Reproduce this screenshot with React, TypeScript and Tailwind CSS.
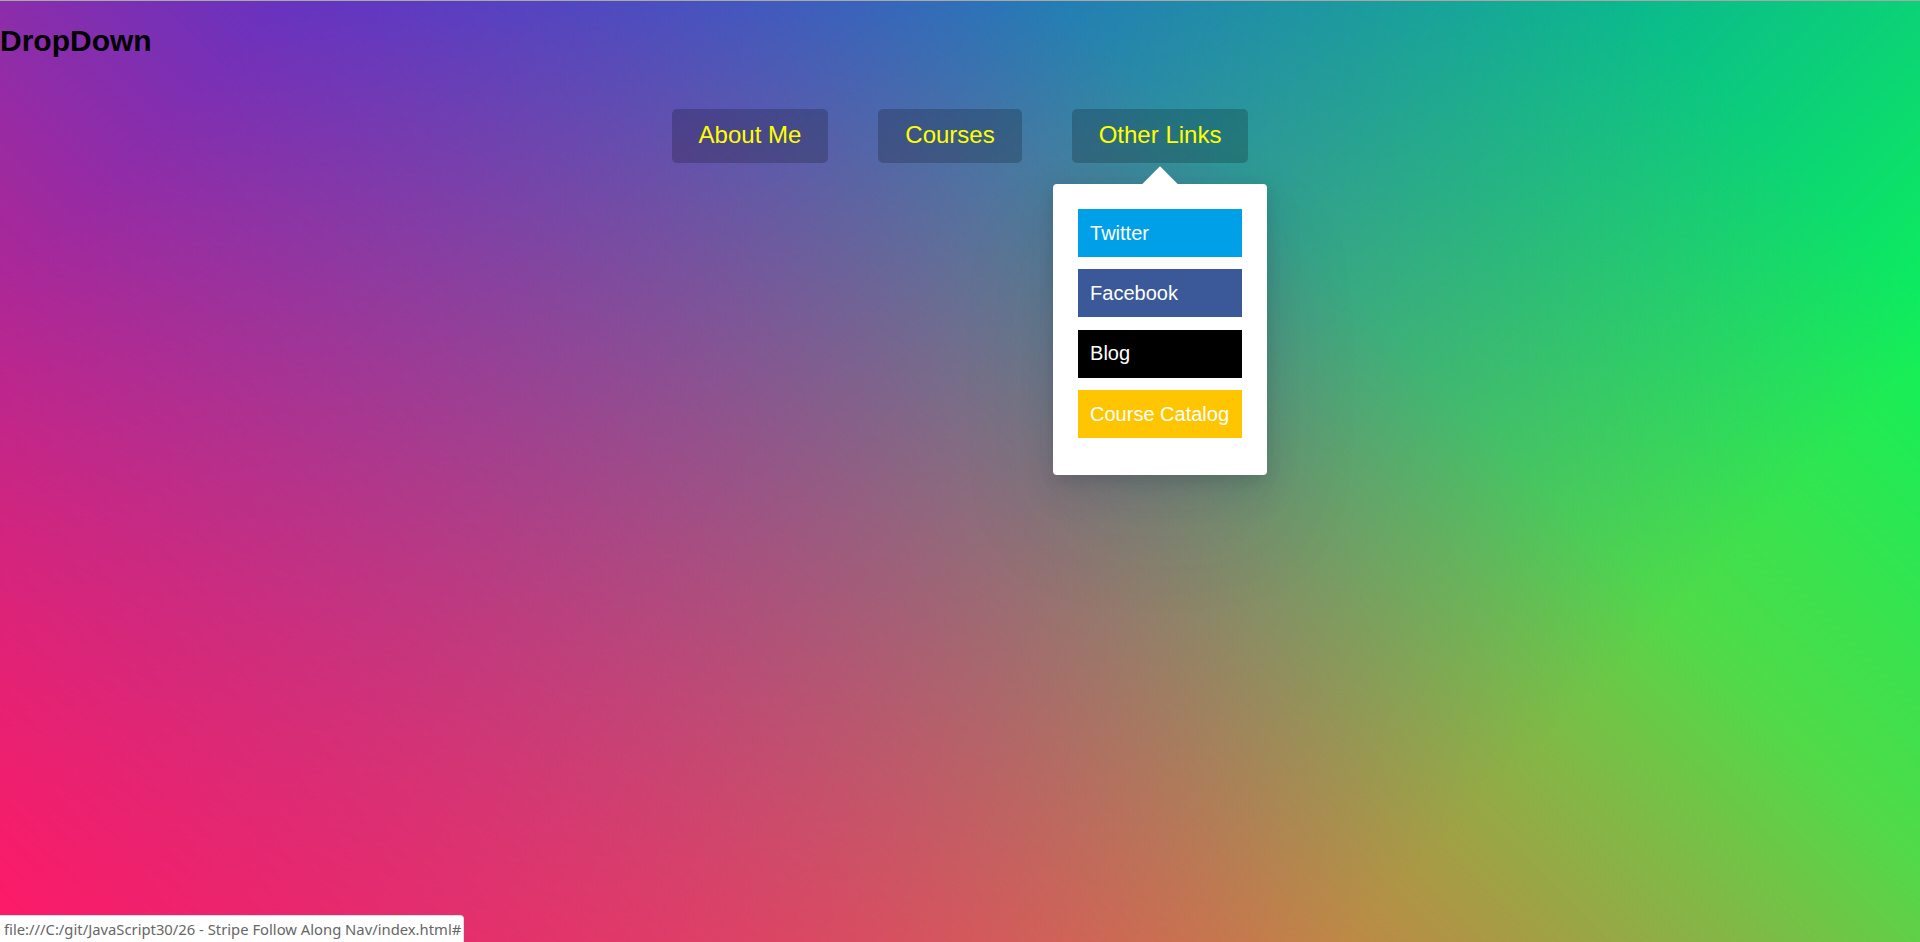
import React from "react";

const links = [
  { label: "Twitter", bg: "bg-[#00a0e9]" },
  { label: "Facebook", bg: "bg-[#3b5998]" },
  { label: "Blog", bg: "bg-black" },
  { label: "Course Catalog", bg: "bg-[#ffc600]" },
];

export default function App() {
  return (
    <div className="relative min-h-screen w-full overflow-hidden font-['Liberation_Sans',Arial,sans-serif] bg-[image:linear-gradient(45deg,hsla(340,100%,55%,1)_0%,hsla(340,100%,55%,0)_70%),linear-gradient(135deg,hsla(225,95%,50%,1)_10%,hsla(225,95%,50%,0)_80%),linear-gradient(225deg,hsla(140,90%,50%,1)_10%,hsla(140,90%,50%,0)_80%),linear-gradient(315deg,hsla(35,95%,55%,1)_100%,hsla(35,95%,55%,0)_70%)]">
      <div className="absolute left-0 top-0 h-px w-full bg-[#a8a8a8]" />
      <h2 className="mt-[24px] text-[30px] leading-[34px] font-bold text-black">DropDown</h2>
      <nav className="mt-[51px]">
        <ul className="flex justify-center gap-[50px]">
          <li>
            <a href="#" className="block rounded-[5px] bg-black/20 px-[27px] pt-[12px] pb-[14px] text-[24px] leading-[28px] text-[#ffff00]">
              About Me
            </a>
          </li>
          <li>
            <a href="#" className="block rounded-[5px] bg-black/20 px-[27px] pt-[12px] pb-[14px] text-[24px] leading-[28px] text-[#ffff00]">
              Courses
            </a>
          </li>
          <li className="relative">
            <a href="#" className="block rounded-[5px] bg-black/20 px-[27px] pt-[12px] pb-[14px] text-[24px] leading-[28px] text-[#ffff00]">
              Other Links
            </a>
            <div className="absolute left-1/2 top-[75px] z-10 w-[214px] -translate-x-1/2 rounded-[4px] bg-white px-[25px] pt-[25px] pb-[37px] shadow-[0_50px_100px_rgba(50,50,93,0.1),0_15px_35px_rgba(50,50,93,0.15),0_5px_15px_rgba(0,0,0,0.1)]">
              <div className="absolute left-1/2 top-0 h-[25px] w-[25px] -translate-x-1/2 -translate-y-1/2 rotate-45 bg-white" />
              <ul className="relative flex flex-col gap-[12.4px]">
                {links.map((l) => (
                  <li key={l.label}>
                    <a href="#" className={`flex h-[48px] items-center pl-[12px] text-[20px] leading-[23px] text-white ${l.bg}`}>
                      {l.label}
                    </a>
                  </li>
                ))}
              </ul>
            </div>
          </li>
        </ul>
      </nav>
      <div className="absolute bottom-0 left-0 flex h-[27px] w-[464px] items-center rounded-tr-[4px] border-t border-r border-[#dadce0] bg-white pl-[4px] font-['Noto_Sans',sans-serif] text-[14.8px] text-[#666666] whitespace-nowrap">
        file:///C:/git/JavaScript30/26 - Stripe Follow Along Nav/index.html#
      </div>
    </div>
  );
}
